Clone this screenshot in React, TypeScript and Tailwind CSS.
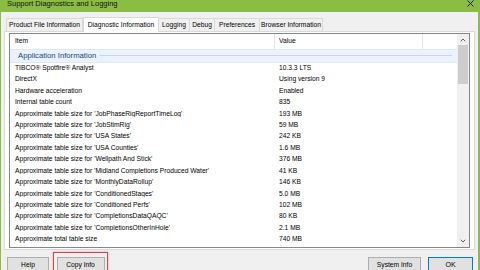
import { ChevronDown, ChevronUp } from "lucide-react";

const rows: [string, string][] = [
  ["TIBCO® Spotfire® Analyst", "10.3.3 LTS"],
  ["DirectX", "Using version 9"],
  ["Hardware acceleration", "Enabled"],
  ["Internal table count", "835"],
  ["Approximate table size for 'JobPhaseRigReportTimeLog'", "193 MB"],
  ["Approximate table size for 'JobStimRig'", "59 MB"],
  ["Approximate table size for 'USA States'", "242 KB"],
  ["Approximate table size for 'USA Counties'", "1.6 MB"],
  ["Approximate table size for 'Wellpath And Stick'", "376 MB"],
  ["Approximate table size for 'Midland Completions Produced Water'", "41 KB"],
  ["Approximate table size for 'MonthlyDataRollup'", "146 KB"],
  ["Approximate table size for 'ConditionedStages'", "5.0 MB"],
  ["Approximate table size for 'Conditioned Perfs'", "102 MB"],
  ["Approximate table size for 'CompletionsDataQAQC'", "80 KB"],
  ["Approximate table size for 'CompletionsOtherInHole'", "2.1 MB"],
  ["Approximate total table size", "740 MB"],
];

const tabs = [
  { label: "Product File Information", width: "w-[77px]" },
  { label: "Diagnostic Information", width: "w-[76px]", active: true },
  { label: "Logging", width: "w-[32px]" },
  { label: "Debug", width: "w-[26px]" },
  { label: "Preferences", width: "w-[46px]" },
  { label: "Browser Information", width: "w-[64px]" },
];

const App = () => {
  return (
    <div className="flex h-[270px] w-[480px] flex-col overflow-hidden bg-[#8bbc44] font-['Liberation_Sans',Arial,sans-serif] text-black">
      {/* title bar */}
      <div className="flex h-[12px] shrink-0 items-start justify-between pl-[7px] pr-[6px]">
        <span className="-mt-[1px] text-[7.5px] leading-[9px] text-[#111]">
          Support Diagnostics and Logging
        </span>
        <svg width="7" height="7" viewBox="0 0 7 7" className="mt-[0px]">
          <path d="M0.5 0.5 L6.5 6.5 M6.5 0.5 L0.5 6.5" stroke="#1a1a1a" strokeWidth="1" />
        </svg>
      </div>

      <div className="ml-[1px] mr-[2px] flex flex-1 flex-col bg-[#f0f0f0] px-[3px] pt-[5px]">
        {/* tabs */}
        <div className="flex h-[14px] items-end pl-[2px]">
          {tabs.map((t) =>
            t.active ? (
              <div
                key={t.label}
                className={`${t.width} relative z-10 -mb-px flex h-[15px] items-center justify-center border border-b-0 border-[#d9d9d9] bg-white text-[6.7px] leading-none`}
              >
                {t.label}
              </div>
            ) : (
              <div
                key={t.label}
                className={`${t.width} -ml-px flex h-[13px] items-center justify-center border border-b-0 border-[#d9d9d9] bg-[#f0f0f0] text-[6.7px] leading-none first:ml-0`}
              >
                {t.label}
              </div>
            )
          )}
        </div>

        {/* tab panel */}
        <div className="flex h-[219px] flex-col border border-[#d9d9d9] bg-white px-[4px] pt-[1px]">
          <div className="flex h-[215px] border border-[#828790] bg-white">
            <div className="flex flex-1 flex-col overflow-hidden">
              {/* column header */}
              <div className="flex h-[15px] shrink-0 items-center text-[6.7px]">
                <div className="flex h-full w-[265px] items-center border-r border-[#e5e5e5] pl-[5px]">
                  Item
                </div>
                <div className="flex h-full w-[148px] items-center border-r border-[#e5e5e5] pl-[4px]">
                  Value
                </div>
              </div>

              {/* group header */}
              <div className="flex h-[13.5px] shrink-0 items-center border-y border-[#dceaf8] bg-[#eaf3fc] pl-[8px] pr-[5px]">
                <span className="text-[7.7px] leading-none text-[#1f3f86]">Application Information</span>
                <div className="ml-[3px] h-px flex-1 bg-[#c4d7ed]" />
              </div>

              {rows.map(([item, value]) => (
                <div key={item} className="flex h-[11.43px] shrink-0 items-center text-[6.7px] leading-none">
                  <div className="w-[265px] truncate pl-[5px]">{item}</div>
                  <div className="pl-[4px]">{value}</div>
                </div>
              ))}
            </div>

            {/* scrollbar */}
            <div className="flex w-[12px] flex-col items-center bg-[#f0f0f0]">
              <ChevronUp className="mt-[2px] h-[8px] w-[8px] text-[#606060]" strokeWidth={3} />
              <div className="mt-[1px] h-[39px] w-[10px] bg-[#cdcdcd]" />
              <div className="flex-1" />
              <ChevronDown className="mb-[2px] h-[8px] w-[8px] text-[#606060]" strokeWidth={3} />
            </div>
          </div>
        </div>

        {/* buttons */}
        <div className="flex items-start pl-[3px] pt-[2px] text-[6.7px]">
          <button className="mt-[5px] flex h-[17px] w-[42px] items-center justify-center border border-[#adadad] bg-[#e1e1e1]">
            Help
          </button>
          <div className="ml-[4px] border-[1.5px] border-[#d2464b] px-[2.5px] pb-[4px] pt-[3.5px] shadow-[0_0_2px_rgba(210,70,75,0.5)]">
            <button className="flex h-[17px] w-[48px] items-center justify-center border border-[#adadad] bg-[#e1e1e1]">
              Copy Info
            </button>
          </div>
          <div className="flex-1" />
          <button className="mt-[5px] flex h-[17px] w-[53px] items-center justify-center border border-[#adadad] bg-[#e1e1e1]">
            System Info
          </button>
          <button className="ml-[7px] mr-[2px] mt-[5px] flex h-[17px] w-[45px] items-center justify-center border border-[#0078d7] bg-[#e1e1e1] text-[7px]">
            OK
          </button>
        </div>
      </div>
    </div>
  );
};

export default App;
